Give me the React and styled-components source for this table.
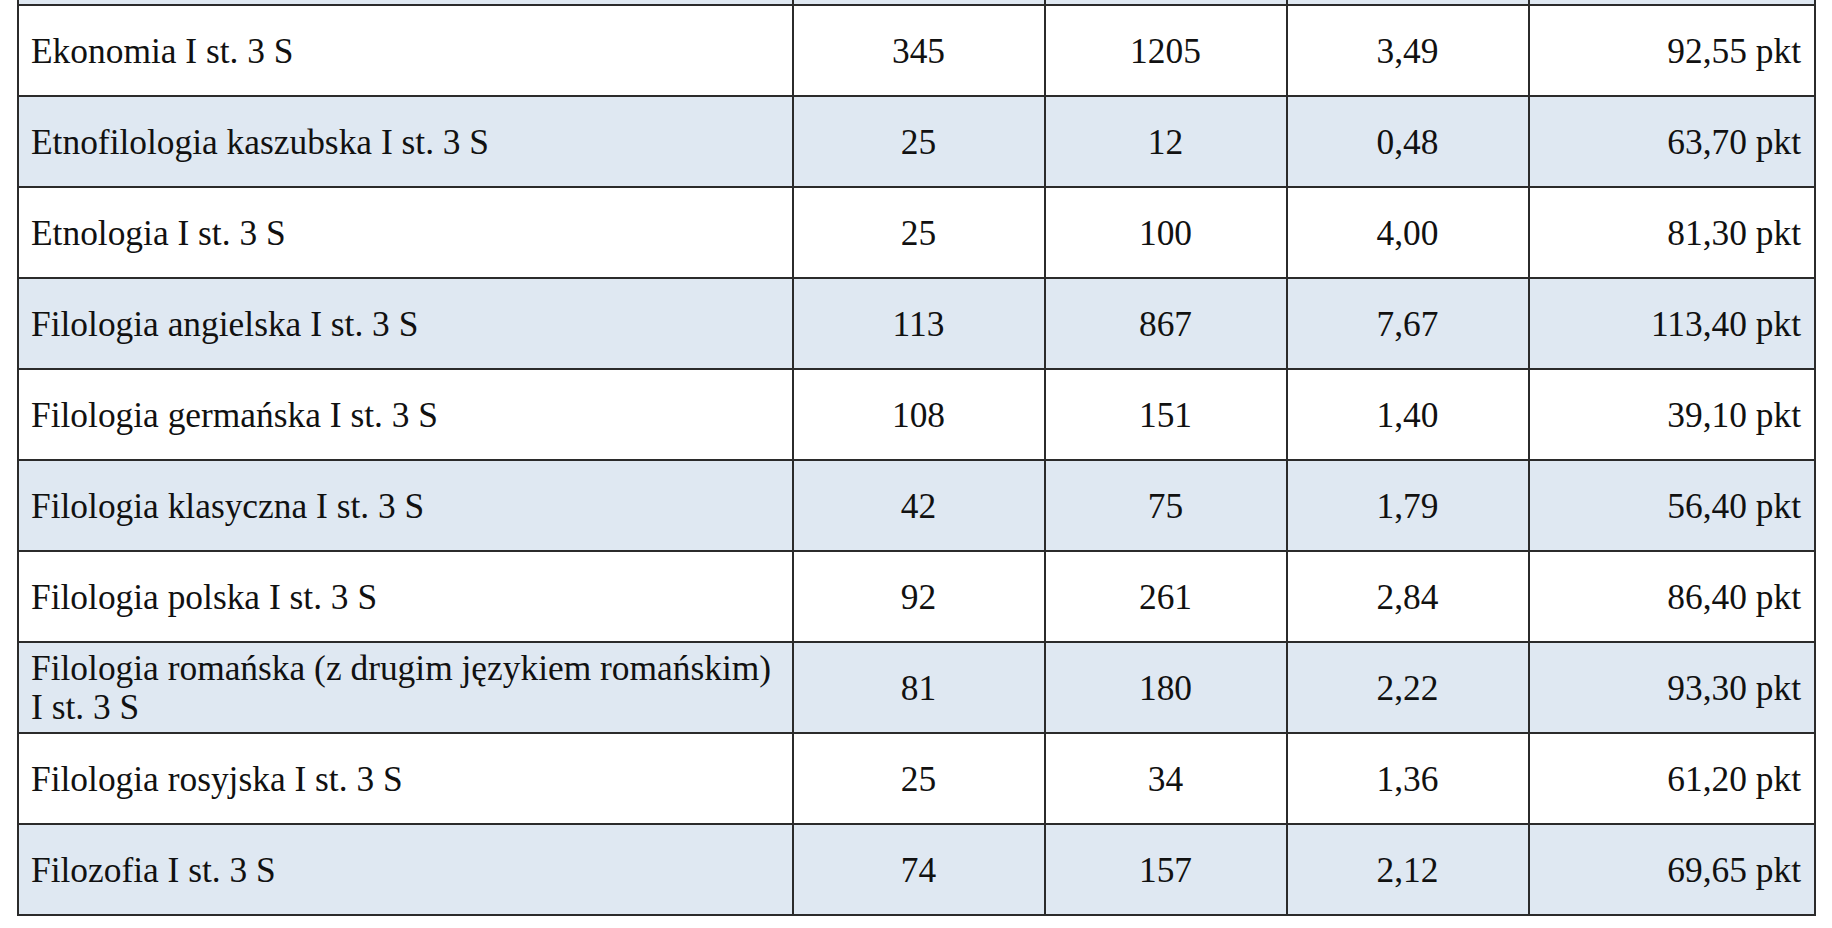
import React from 'react';
import styled, { createGlobalStyle } from 'styled-components';

const GlobalStyle = createGlobalStyle`
  html, body {
    margin: 0;
    padding: 0;
    background: #ffffff;
    overflow: hidden;
  }
`;

const Page = styled.div`
  width: 1832px;
  height: 928px;
  overflow: hidden;
  background: #ffffff;
`;

const Table = styled.table`
  border-collapse: collapse;
  table-layout: fixed;
  width: 1797px;
  margin: -87px 0 0 17px;
  font-family: "Liberation Serif", serif;
  font-size: 35.4px;
  line-height: 39px;
  color: #111111;
`;

const Row = styled.tr`
  height: 91px;
  background: ${({ $shaded }) => ($shaded ? '#dfe8f2' : '#ffffff')};
`;

const Cell = styled.td`
  border: 2px solid #2b2b2b;
  padding: 5px 13px 4px 12px;
  vertical-align: middle;
  text-align: ${({ $align }) => $align || 'left'};
  white-space: ${({ $wrap }) => ($wrap ? 'normal' : 'nowrap')};
`;

const rows = [
  ['Ekonomia I st. 3 S', '345', '1205', '3,49', '92,55 pkt'],
  ['Etnofilologia kaszubska I st. 3 S', '25', '12', '0,48', '63,70 pkt'],
  ['Etnologia I st. 3 S', '25', '100', '4,00', '81,30 pkt'],
  ['Filologia angielska I st. 3 S', '113', '867', '7,67', '113,40 pkt'],
  ['Filologia germańska I st. 3 S', '108', '151', '1,40', '39,10 pkt'],
  ['Filologia klasyczna I st. 3 S', '42', '75', '1,79', '56,40 pkt'],
  ['Filologia polska I st. 3 S', '92', '261', '2,84', '86,40 pkt'],
  ['Filologia romańska (z drugim językiem romańskim) I st. 3 S', '81', '180', '2,22', '93,30 pkt'],
  ['Filologia rosyjska I st. 3 S', '25', '34', '1,36', '61,20 pkt'],
  ['Filozofia I st. 3 S', '74', '157', '2,12', '69,65 pkt'],
];

const App = () => {
  return (
    <Page>
      <GlobalStyle />
      <Table>
        <colgroup>
          <col style={{ width: 775 }} />
          <col style={{ width: 252 }} />
          <col style={{ width: 242 }} />
          <col style={{ width: 242 }} />
          <col style={{ width: 286 }} />
        </colgroup>
        <tbody>
          {/* previous row, scrolled out of view */}
          <Row $shaded>
            <Cell />
            <Cell />
            <Cell />
            <Cell />
            <Cell />
          </Row>
          {rows.map(([name, places, candidates, ratio, threshold], i) => (
            <Row key={name} $shaded={i % 2 === 1}>
              <Cell $wrap>{name}</Cell>
              <Cell $align="center">{places}</Cell>
              <Cell $align="center">{candidates}</Cell>
              <Cell $align="center">{ratio}</Cell>
              <Cell $align="right">{threshold}</Cell>
            </Row>
          ))}
        </tbody>
      </Table>
    </Page>
  );
};

export default App;
